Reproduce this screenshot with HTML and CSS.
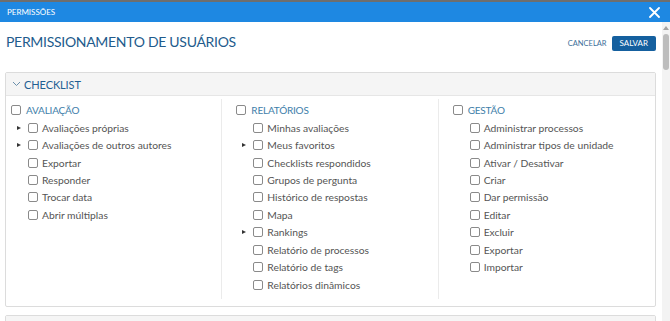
FILE: index.html
```html
<!DOCTYPE html>
<html lang="pt">
<head>
<meta charset="utf-8">
<title>Permissões</title>
<link rel="stylesheet" href="styles.css">
</head>
<body>
<div class="topbar">
  <span class="topbar-title">PERMISSÕES</span>
  <svg class="close" width="11" height="11" viewBox="0 0 11 11"><path d="M1 1 L10 10 M10 1 L1 10" stroke="#fff" stroke-width="1.8" stroke-linecap="round"/></svg>
</div>
<div class="main">
  <div class="content">
    <div class="head-row">
      <h1 class="title">PERMISSIONAMENTO DE USUÁRIOS</h1>
      <div class="actions">
        <span class="btn-cancel">CANCELAR</span>
        <span class="btn-save">SALVAR</span>
      </div>
    </div>
    <div class="panel">
      <div class="panel-head">
        <svg class="chev" width="9" height="6" viewBox="0 0 9 6"><path d="M1 1 L4.5 4.5 L8 1" fill="none" stroke="#6b8fab" stroke-width="1"/></svg>
        <span class="panel-title">CHECKLIST</span>
      </div>
      <div class="panel-body">
        <div class="col col-first">
          <div class="group"><span class="cb"></span><span class="group-label">AVALIAÇÃO</span></div>
          <div class="item"><span class="arrow on"></span><span class="cb"></span><span class="label">Avaliações próprias</span></div>
          <div class="item"><span class="arrow on"></span><span class="cb"></span><span class="label">Avaliações de outros autores</span></div>
          <div class="item"><span class="arrow"></span><span class="cb"></span><span class="label">Exportar</span></div>
          <div class="item"><span class="arrow"></span><span class="cb"></span><span class="label">Responder</span></div>
          <div class="item"><span class="arrow"></span><span class="cb"></span><span class="label">Trocar data</span></div>
          <div class="item"><span class="arrow"></span><span class="cb"></span><span class="label">Abrir múltiplas</span></div>
        </div>
        <div class="col">
          <div class="group"><span class="cb"></span><span class="group-label">RELATÓRIOS</span></div>
          <div class="item"><span class="arrow"></span><span class="cb"></span><span class="label">Minhas avaliações</span></div>
          <div class="item"><span class="arrow on"></span><span class="cb"></span><span class="label">Meus favoritos</span></div>
          <div class="item"><span class="arrow"></span><span class="cb"></span><span class="label">Checklists respondidos</span></div>
          <div class="item"><span class="arrow"></span><span class="cb"></span><span class="label">Grupos de pergunta</span></div>
          <div class="item"><span class="arrow"></span><span class="cb"></span><span class="label">Histórico de respostas</span></div>
          <div class="item"><span class="arrow"></span><span class="cb"></span><span class="label">Mapa</span></div>
          <div class="item"><span class="arrow on"></span><span class="cb"></span><span class="label">Rankings</span></div>
          <div class="item"><span class="arrow"></span><span class="cb"></span><span class="label">Relatório de processos</span></div>
          <div class="item"><span class="arrow"></span><span class="cb"></span><span class="label">Relatório de tags</span></div>
          <div class="item"><span class="arrow"></span><span class="cb"></span><span class="label">Relatórios dinâmicos</span></div>
        </div>
        <div class="col col-last">
          <div class="group"><span class="cb"></span><span class="group-label">GESTÃO</span></div>
          <div class="item"><span class="arrow"></span><span class="cb"></span><span class="label">Administrar processos</span></div>
          <div class="item"><span class="arrow"></span><span class="cb"></span><span class="label">Administrar tipos de unidade</span></div>
          <div class="item"><span class="arrow"></span><span class="cb"></span><span class="label">Ativar / Desativar</span></div>
          <div class="item"><span class="arrow"></span><span class="cb"></span><span class="label">Criar</span></div>
          <div class="item"><span class="arrow"></span><span class="cb"></span><span class="label">Dar permissão</span></div>
          <div class="item"><span class="arrow"></span><span class="cb"></span><span class="label">Editar</span></div>
          <div class="item"><span class="arrow"></span><span class="cb"></span><span class="label">Excluir</span></div>
          <div class="item"><span class="arrow"></span><span class="cb"></span><span class="label">Exportar</span></div>
          <div class="item"><span class="arrow"></span><span class="cb"></span><span class="label">Importar</span></div>
        </div>
      </div>
    </div>
    <div class="panel panel-next">
      <div class="panel-head"></div>
    </div>
  </div>
  <div class="scrollbar">
    <span class="sb-up"></span>
    <span class="sb-thumb"></span>
  </div>
</div>
</body>
</html>
```
FILE: styles.css
```css
* { box-sizing: border-box; }
html, body { margin: 0; padding: 0; }
body {
  width: 670px;
  height: 321px;
  overflow: hidden;
  background: #fff;
  font-family: Lato, "Noto Sans", sans-serif;
  color: #555;
}
.topbar {
  height: 22px;
  border-top: 2px solid #6e6e6e;
  background: #1e88e2;
  display: flex;
  align-items: center;
  justify-content: space-between;
  padding: 0 10px 0 7px;
}
.topbar-title {
  color: #fff;
  font-size: 8px;
}
.close { display: block; }
.main {
  display: flex;
  height: 299px;
}
.content {
  flex: 1;
  padding: 0 6px 0 5px;
  overflow: hidden;
}
.head-row {
  height: 42px;
  display: flex;
  align-items: center;
  justify-content: space-between;
  padding: 0 0 0 1px;
}
.title {
  margin: -3px 0 0 0;
  font-size: 14px;
  font-weight: 400;
  color: #225b8c;
  letter-spacing: -0.3px;
}
.actions {
  display: flex;
  align-items: center;
  gap: 5px;
}
.btn-cancel {
  font-size: 7.5px;
  color: #3c6f99;
}
.btn-save {
  background: #15609f;
  color: #fff;
  font-size: 8px;
  height: 15px;
  line-height: 15px;
  padding: 0 8px;
  border-radius: 2px;
}
.panel {
  margin-top: 8px;
  border: 1px solid #dcdcdc;
  border-radius: 2px;
}
.panel-head {
  height: 23px;
  background: #f5f5f5;
  border-bottom: 1px solid #e6e6e6;
  display: flex;
  align-items: center;
  padding-left: 6px;
  gap: 3px;
}
.chev { display: block; }
.panel-title {
  font-size: 11px;
  color: #1f5f93;
  letter-spacing: -0.1px;
}
.panel-body {
  display: grid;
  grid-template-columns: 1fr 1fr 1fr;
}
.col {
  margin: 3px 0 7px 0;
  padding: 2px 0 6px 14px;
  border-right: 1px solid #ebebeb;
}
.col-first { padding-left: 5px; }
.col-last { border-right: none; }
.group, .item {
  display: flex;
  align-items: center;
  height: 17.45px;
}
.group { margin-bottom: 0.5px; }
.group .cb { margin-right: 5px; }
.group-label {
  font-size: 10px;
  color: #3e7ea9;
  letter-spacing: -0.2px;
}
.item { padding-left: 5px; }
.arrow {
  width: 12px;
  flex: none;
  display: flex;
  align-items: center;
}
.arrow.on::before {
  content: "";
  display: block;
  margin-left: 1px;
  width: 0;
  height: 0;
  border-left: 4px solid #333;
  border-top: 2.5px solid transparent;
  border-bottom: 2.5px solid transparent;
}
.cb {
  width: 10px;
  height: 10px;
  flex: none;
  border: 1px solid #8a8a8a;
  border-radius: 2px;
  background: #fff;
}
.item .cb { margin-right: 4px; }
.label {
  font-size: 10.3px;
  color: #555;
  white-space: nowrap;
}
.panel-next {
  margin-top: 8px;
}
.scrollbar {
  width: 8px;
  background: #f3f3f3;
  display: flex;
  flex-direction: column;
  align-items: center;
  padding-top: 4px;
}
.sb-up {
  width: 0;
  height: 0;
  border-bottom: 4px solid #a3a3a3;
  border-left: 3px solid transparent;
  border-right: 3px solid transparent;
}
.sb-thumb {
  margin-top: 4px;
  width: 6px;
  height: 36px;
  background: #bdbdbd;
  border-radius: 3px;
}
```
